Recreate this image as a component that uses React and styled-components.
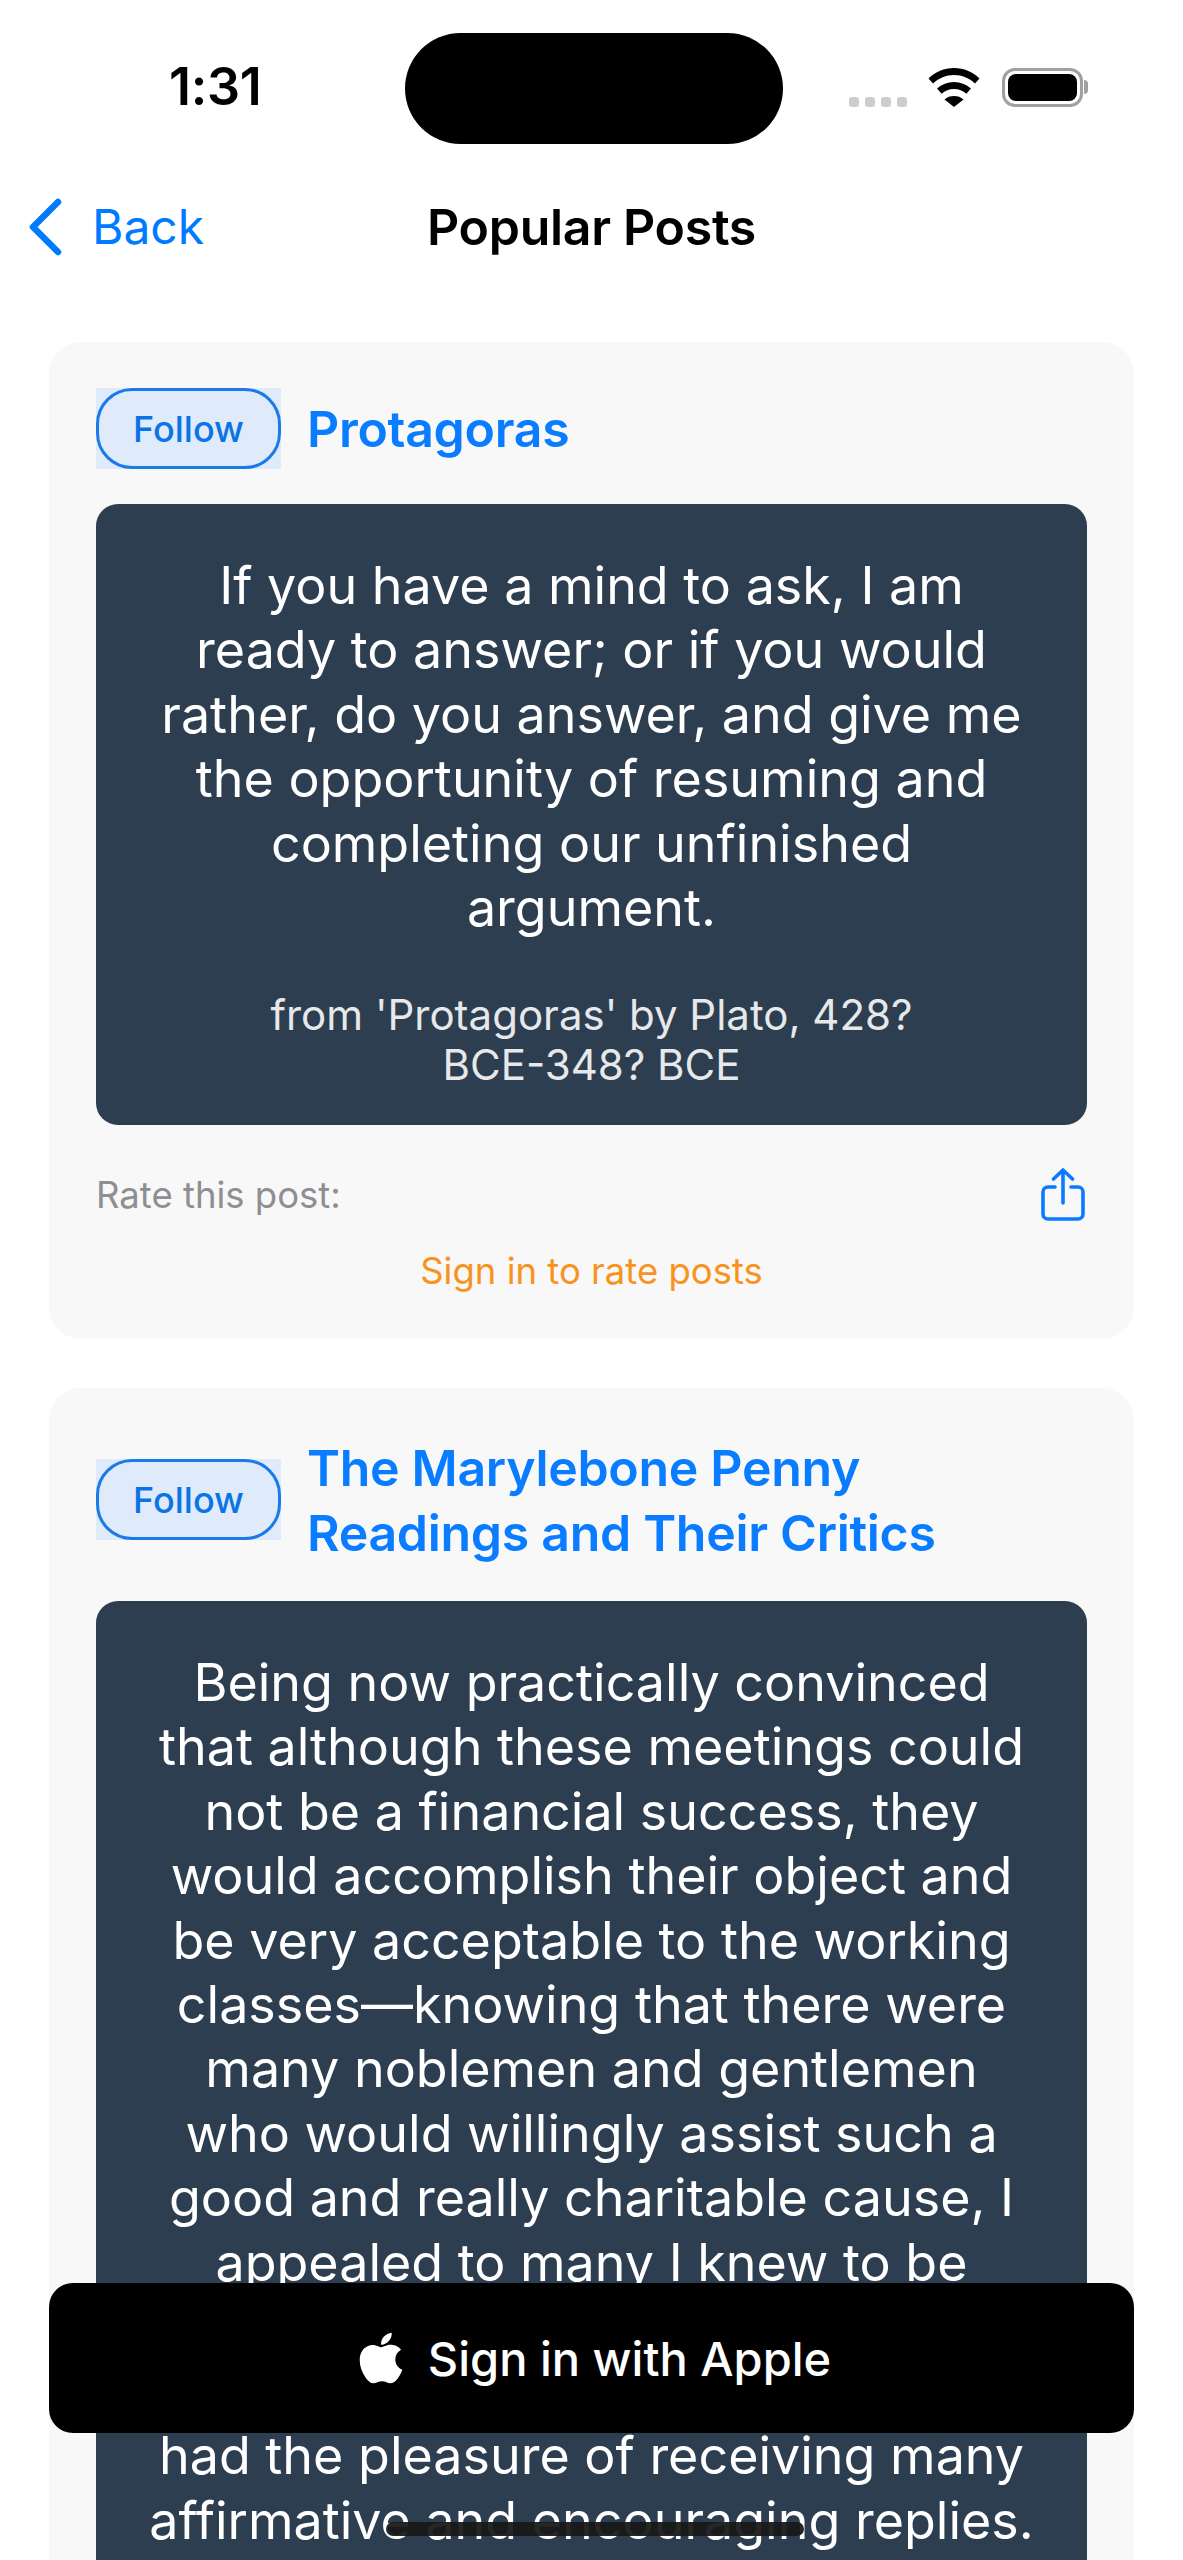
import React from 'react'
import styled, { createGlobalStyle } from 'styled-components'
import { FaApple } from 'react-icons/fa'

const Global = createGlobalStyle`
  html, body { margin: 0; padding: 0; background: #fff; }
  * { box-sizing: border-box; }
`

const Screen = styled.div`
  position: relative;
  width: 1183px;
  height: 2560px;
  overflow: hidden;
  background: #fff;
  font-family: Inter, "Liberation Sans", sans-serif;
`

const StatusBar = styled.div`
  display: flex;
  align-items: flex-start;
  padding-top: 33px;
  height: 144px;
`
const TimeCell = styled.div`
  width: 405px;
  padding: 24px 0 0 169px;
  font-size: 52px;
  line-height: 60px;
  font-weight: 600;
  color: #000;
  letter-spacing: -0.3px;
`
const Island = styled.div`
  width: 378px;
  height: 111px;
  border-radius: 56px;
  background: #000;
`
const StatusIcons = styled.div`
  display: flex;
  align-items: flex-end;
  height: 74px;
  padding-left: 66px;
`
const Dots = styled.div`
  display: flex;
  gap: 6px;
  margin-right: 21px;
`
const Dot = styled.span`
  width: 10px;
  height: 10px;
  border-radius: 3px;
  background: #cdcdcd;
`
const Battery = styled.div`
  position: relative;
  width: 81px;
  height: 39px;
  margin-left: 22px;
  border: 3px solid #a0a0a0;
  border-radius: 13px;
  padding: 3px;
`
const BatteryFill = styled.div`
  width: 100%;
  height: 100%;
  border-radius: 8px;
  background: #000;
`
const BatteryNub = styled.span`
  position: absolute;
  right: -8px;
  top: 9px;
  width: 4px;
  height: 14px;
  border-radius: 0 4px 4px 0;
  background: #a0a0a0;
`

const NavBar = styled.div`
  display: grid;
  grid-template-columns: 1fr auto 1fr;
  align-items: center;
  height: 166px;
  padding: 0 28px;
`
const BackLink = styled.div`
  display: flex;
  align-items: center;
  gap: 30px;
  font-size: 48px;
  color: #007aff;
  margin-top: -1px;
`
const NavTitle = styled.div`
  font-size: 50px;
  font-weight: 600;
  color: #000;
  letter-spacing: -0.3px;
`

const Feed = styled.div`
  display: flex;
  flex-direction: column;
  gap: 49px;
  padding: 32px 49px 0;
`
const Card = styled.div`
  background: #f8f8f8;
  border-radius: 32px;
  padding: 46px 47px 0;
`
const CardHead = styled.div`
  display: flex;
  align-items: center;
  gap: 26px;
  margin-bottom: 35px;
`
const FollowBack = styled.div`
  flex: none;
  background: #dfeafa;
`
const FollowBox = styled.div`
  width: 185px;
  height: 81px;
  display: flex;
  align-items: center;
  justify-content: center;
  border: 3px solid #1a7be8;
  border-radius: 36px;
  font-size: 36px;
  font-weight: 500;
  color: #0a74e6;
`
const CardTitle = styled.div`
  padding-top: 2px;
  font-size: 50px;
  line-height: 65px;
  font-weight: 600;
  color: #0a7cff;
  letter-spacing: -0.3px;
`
const Line = styled.span`
  display: block;
  white-space: nowrap;
`
const Quote = styled.div`
  background: #2c3e50;
  border-radius: 22px;
  padding: 50px 0 35px;
  text-align: center;
  color: #fff;
`
const QuoteText = styled.div`
  font-size: 52px;
  line-height: 64.45px;
`
const Attribution = styled.div`
  margin-top: 49px;
  font-size: 42px;
  line-height: 50px;
  color: #e6e8ea;
`
const RateRow = styled.div`
  display: flex;
  justify-content: space-between;
  align-items: center;
  padding: 43px 2px 0 0;
`
const RateLabel = styled.div`
  font-size: 36.500px;
  color: #8e8e93;
`
const SignHint = styled.div`
  margin-top: 26px;
  padding-bottom: 45px;
  text-align: center;
  font-size: 36.500px;
  line-height: 46px;
  color: #f7931e;
`

const AppleButton = styled.div`
  position: absolute;
  left: 49px;
  top: 2283px;
  width: 1085px;
  height: 150px;
  display: flex;
  align-items: center;
  justify-content: center;
  gap: 18px;
  background: #000;
  border-radius: 24px;
  color: #fff;
  font-size: 47px;
  font-weight: 500;
`
const HomeBar = styled.div`
  position: absolute;
  left: 386px;
  top: 2522px;
  width: 418px;
  height: 14px;
  border-radius: 7px;
  background: rgba(24, 24, 24, 0.94);
`

const Wifi = () => (
  <svg width="52" height="39" viewBox="0 0 52 39">
    <path d="M26 0C16 0 7.5 3.6 0.5 10.5L5 15.5C11 10 18 7 26 7s15 3 21 8.5l4.500-5C44.500 3.600 36 0 26 0z" />
    <path d="M26 14c-6.500 0-12.200 2.300-17 6.600l4.600 5.200C17 22.800 21.200 21 26 21s9 1.800 12.400 4.800l4.600-5.200C38.200 16.300 32.500 14 26 14z" />
    <path d="M26 28c-3.700 0-6.800 1.200-9.500 3.400L26 39l9.500-7.600C32.800 29.200 29.700 28 26 28z" />
  </svg>
)

const Chevron = () => (
  <svg width="34" height="58" viewBox="0 0 34 58" fill="none" stroke="#007aff" strokeWidth="6.500" strokeLinecap="round" strokeLinejoin="round">
    <path d="M30 4L5 29l25 25" />
  </svg>
)

const ShareIcon = () => (
  <svg width="44" height="54" viewBox="0 0 44 54" fill="none" stroke="#0a7aff" strokeWidth="3.600" strokeLinecap="round" strokeLinejoin="round">
    <path d="M14 19H7a5 5 0 0 0-5 5v22a5 5 0 0 0 5 5h30a5 5 0 0 0 5-5V24a5 5 0 0 0-5-5h-7" />
    <path d="M22 35V3M12.500 11L22 2l9.500 9" />
  </svg>
)

// the reference breaks its lines narrower than Inter would, so they are kept as data
const posts = [
  {
    title: ['Protagoras'],
    text: [
      'If you have a mind to ask, I am',
      'ready to answer; or if you would',
      'rather, do you answer, and give me',
      'the opportunity of resuming and',
      'completing our unfinished',
      'argument.',
    ],
    source: ["from 'Protagoras' by Plato, 428?", 'BCE-348? BCE'],
  },
  {
    title: ['The Marylebone Penny', 'Readings and Their Critics'],
    text: [
      'Being now practically convinced',
      'that although these meetings could',
      'not be a financial success, they',
      'would accomplish their object and',
      'be very acceptable to the working',
      'classes—knowing that there were',
      'many noblemen and gentlemen',
      'who would willingly assist such a',
      'good and really charitable cause, I',
      'appealed to many I knew to be',
      'interested in the welfare of the',
      'people, and I soon',
      'had the pleasure of receiving many',
      'affirmative and encouraging replies.',
    ],
  },
]

export default function App() {
  return (
    <Screen>
      <Global />
      <StatusBar>
        <TimeCell>1:31</TimeCell>
        <Island />
        <StatusIcons>
          <Dots>
            <Dot /><Dot /><Dot /><Dot />
          </Dots>
          <Wifi />
          <Battery>
            <BatteryFill />
            <BatteryNub />
          </Battery>
        </StatusIcons>
      </StatusBar>
      <NavBar>
        <BackLink>
          <Chevron />
          Back
        </BackLink>
        <NavTitle>Popular Posts</NavTitle>
      </NavBar>
      <Feed>
        {posts.map((p) => (
          <Card key={p.title[0]}>
            <CardHead>
              <FollowBack>
                <FollowBox>Follow</FollowBox>
              </FollowBack>
              <CardTitle>
                {p.title.map((l) => <Line key={l}>{l}</Line>)}
              </CardTitle>
            </CardHead>
            <Quote>
              <QuoteText>
                {p.text.map((l) => <Line key={l}>{l}</Line>)}
              </QuoteText>
              {p.source && (
                <Attribution>
                  {p.source.map((l) => <Line key={l}>{l}</Line>)}
                </Attribution>
              )}
            </Quote>
            {p.source && (
              <>
                <RateRow>
                  <RateLabel>Rate this post:</RateLabel>
                  <ShareIcon />
                </RateRow>
                <SignHint>Sign in to rate posts</SignHint>
              </>
            )}
          </Card>
        ))}
      </Feed>
      <AppleButton>
        <FaApple size={58} />
        Sign in with Apple
      </AppleButton>
      <HomeBar />
    </Screen>
  )
}
